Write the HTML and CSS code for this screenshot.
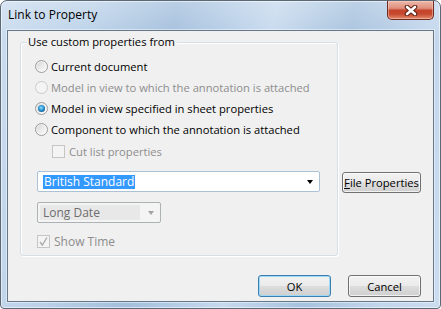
FILE: index.html
```html
<!DOCTYPE html>
<html>
<head>
<meta charset="utf-8">
<title>Link to Property</title>
<link rel="stylesheet" href="styles.css">
</head>
<body>
<div class="window">
  <div class="titlebar">
    <span class="title">Link to Property</span>
    <div class="close">
      <svg width="14" height="11" viewBox="0 0 14 11">
        <path d="M3 2 L11 9 M11 2 L3 9" stroke="#5a1c10" stroke-width="4.6" stroke-linecap="round" fill="none"/>
        <path d="M3 2 L11 9 M11 2 L3 9" stroke="#ffffff" stroke-width="2.6" stroke-linecap="round" fill="none"/>
      </svg>
    </div>
  </div>
  <div class="client">
    <div class="main">
      <div class="group">
        <span class="legend">Use custom properties from</span>
        <div class="row"><span class="radio"></span><span>Current document</span></div>
        <div class="row disabled"><span class="radio"></span><span>Model in view to which the annotation is attached</span></div>
        <div class="row"><span class="radio checked"></span><span>Model in view specified in sheet properties</span></div>
        <div class="row"><span class="radio"></span><span>Component to which the annotation is attached</span></div>
        <div class="row cutrow disabled"><span class="check"></span><span>Cut list properties</span></div>
        <div class="combo">
          <span class="combo-text"><span class="sel">British Standard</span></span>
          <span class="arrow"></span>
        </div>
        <div class="dropdown">
          <span class="dd-text">Long Date</span>
          <span class="arrow grey"></span>
        </div>
        <div class="row showrow disabled"><span class="check checked"><svg width="11" height="11" viewBox="0 0 11 11"><path d="M2 6 L4.3 9 L9 1.5" stroke="#a9a9a9" stroke-width="1.3" fill="none"/></svg></span><span>Show Time</span></div>
      </div>
      <div class="side">
        <button class="btn fileprops"><u>F</u>ile Properties</button>
      </div>
    </div>
    <div class="footer">
      <button class="btn ok">OK</button>
      <button class="btn">Cancel</button>
    </div>
  </div>
</div>
</body>
</html>
```

FILE: styles.css
```css
html, body {
  margin: 0;
  padding: 0;
}
body {
  width: 441px;
  height: 309px;
  overflow: hidden;
  background: #ffffff;
  font-family: "Open Sans", "Noto Sans", sans-serif;
  font-size: 11.2px;
  color: #000;
}
.window {
  width: 441px;
  height: 309px;
  box-sizing: border-box;
  border: 1px solid #5b6876;
  border-radius: 7px 7px 4px 4px;
  padding: 0 6px 6px 6px;
  display: flex;
  flex-direction: column;
  background:
    linear-gradient(180deg, rgba(255,255,255,0.25) 0, rgba(255,255,255,0) 40px),
    linear-gradient(100deg, #cadcef 0%, #bcd2e9 18%, #a3bfdc 36%, #b4cce6 46%, #c6d9ed 56%, #a7c2de 72%, #c2d6ec 88%, #cbdcef 100%);
  box-shadow: inset 0 0 0 1px rgba(255,255,255,0.55);
}
.titlebar {
  height: 29px;
  display: flex;
  align-items: flex-start;
}
.title {
  margin-left: 1px;
  margin-top: 6px;
  font-size: 12px;
  line-height: 16px;
  color: #000;
}
.close {
  margin-left: auto;
  width: 47px;
  height: 19px;
  box-sizing: border-box;
  border: 1px solid #6e2b20;
  border-top: none;
  border-radius: 0 0 5px 5px;
  background: linear-gradient(180deg, #edb8aa 0%, #df8f7b 40%, #c4442b 52%, #c6492f 72%, #e48a6b 100%);
  box-shadow: inset 0 0 0 1px rgba(255,220,210,0.45);
  display: flex;
  align-items: center;
  justify-content: center;
}
.client {
  flex: 1;
  border: 1px solid #66778a;
  box-shadow: 0 0 0 1px rgba(255,255,255,0.45);
  background: #f0f0f0;
  display: flex;
  flex-direction: column;
  padding: 11px 12px 4px 12px;
}
.main {
  display: flex;
  align-items: flex-start;
}
.group {
  position: relative;
  width: 319px;
  height: 214px;
  box-sizing: border-box;
  border: 1px solid #d5dfe5;
  border-radius: 3px;
  box-shadow: 1px 1px 0 #ffffff, inset 1px 1px 0 #ffffff;
  padding: 13px 0 0 14px;
}
.legend {
  position: absolute;
  left: 6px;
  top: -9px;
  padding: 0 2px 0 1px;
  background: #f0f0f0;
  line-height: 16px;
}
.row {
  height: 21px;
  display: flex;
  align-items: center;
  white-space: nowrap;
}
.row.disabled {
  color: #8d8d8d;
}
.radio {
  position: relative;
  width: 13px;
  height: 13px;
  box-sizing: border-box;
  border-radius: 50%;
  border: 1px solid #9c9c9c;
  background: linear-gradient(135deg, #d2d2d2 0%, #e9e9e9 45%, #fbfbfb 100%);
  box-shadow: inset 0 0 0 1px rgba(255,255,255,0.6);
  margin-right: 3px;
  flex: none;
}
.disabled .radio {
  border-color: #cacaca;
  background: #f4f4f4;
  box-shadow: none;
}
.radio.checked::after {
  content: "";
  position: absolute;
  left: 2px;
  top: 2px;
  width: 7px;
  height: 7px;
  border-radius: 50%;
  background: radial-gradient(circle at 45% 40%, #9fe0fb 0, #3aa4e0 35%, #0f5d95 75%, #0b3f6a 100%);
}
.cutrow {
  height: 22px;
  margin-left: 17px;
}
.check {
  width: 13px;
  height: 13px;
  box-sizing: border-box;
  border: 1px solid #8f8f8f;
  background: #f4f4f4;
  margin-right: 4px;
  flex: none;
  display: flex;
  align-items: center;
  justify-content: center;
}
.disabled .check {
  border-color: #c5c5c5;
  background: #f4f4f4;
}
.combo {
  margin: 9px 0 0 2px;
  width: 283px;
  height: 21px;
  box-sizing: border-box;
  border: 1px solid #abc1d6;
  border-radius: 2px;
  background: #ffffff;
  display: flex;
  align-items: center;
  padding: 0 6px 0 5px;
}
.combo-text {
  flex: 1;
}
.sel {
  display: inline-block;
  background: #3399ff;
  color: #ffffff;
  font-size: 12px;
  line-height: 14px;
  padding: 0 1px;
}
.arrow {
  width: 0;
  height: 0;
  border-left: 3.5px solid transparent;
  border-right: 3.5px solid transparent;
  border-top: 4px solid #000;
}
.arrow.grey {
  border-top-color: #a3a3a3;
}
.dropdown {
  margin: 10px 0 0 2px;
  width: 124px;
  height: 21px;
  box-sizing: border-box;
  border: 1px solid #adb2b5;
  border-radius: 2px;
  background: #f4f4f4;
  display: flex;
  align-items: center;
  padding: 2px 5px 2px 2px;
}
.dd-text {
  width: 100px;
  height: 15px;
  box-sizing: border-box;
  background: #e8e8e8;
  color: #6d6d6d;
  font-size: 12px;
  line-height: 15px;
  padding-left: 3px;
  margin-right: 8px;
}
.showrow {
  height: 20px;
  margin: 8px 0 0 2px;
  font-size: 12px;
}
.side {
  margin-left: 4px;
  padding-top: 130px;
}
.btn {
  font-family: "Open Sans", "Noto Sans", sans-serif;
  font-size: 11.2px;
  color: #000;
  height: 22px;
  box-sizing: border-box;
  border: 1px solid #707070;
  border-radius: 3px;
  background: linear-gradient(180deg, #f2f2f2 0%, #ebebeb 48%, #dddddd 52%, #cfcfcf 100%);
  box-shadow: inset 0 0 0 1px rgba(255,255,255,0.7);
  padding: 0;
  margin: 0;
}
.fileprops {
  width: 79px;
  height: 21px;
}
.footer {
  margin-top: auto;
  display: flex;
  justify-content: flex-end;
  gap: 17px;
}
.footer .btn {
  width: 73px;
}
.ok {
  border-color: #3c7fb1;
  box-shadow: inset 0 0 0 1px #9fd8f4;
}
```
